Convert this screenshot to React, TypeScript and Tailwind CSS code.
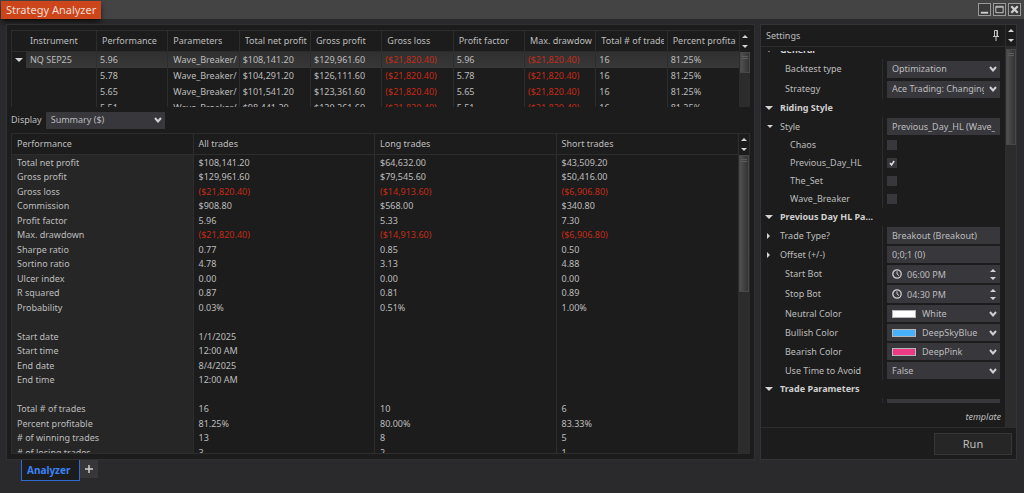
import { useState, type ReactNode } from 'react';

const GRID_COLUMNS = [
    'Performance', 'Parameters', 'Total net profit', 'Gross profit', 'Gross loss',
    'Profit factor', 'Max. drawdown', 'Total # of trades', 'Percent profitable',
];

const GRID_ROWS = [
    ['5.96', 'Wave_Breaker/', '$108,141.20', '$129,961.60', '($21,820.40)', '5.96', '($21,820.40)', '16', '81.25%'],
    ['5.78', 'Wave_Breaker/', '$104,291.20', '$126,111.60', '($21,820.40)', '5.78', '($21,820.40)', '16', '81.25%'],
    ['5.65', 'Wave_Breaker/', '$101,541.20', '$123,361.60', '($21,820.40)', '5.65', '($21,820.40)', '16', '81.25%'],
    ['5.51', 'Wave_Breaker/', '$98,441.20', '$120,261.60', '($21,820.40)', '5.51', '($21,820.40)', '16', '81.25%'],
];

const SUMMARY_ROWS = [
    ['Total net profit', '$108,141.20', '$64,632.00', '$43,509.20'],
    ['Gross profit', '$129,961.60', '$79,545.60', '$50,416.00'],
    ['Gross loss', '($21,820.40)', '($14,913.60)', '($6,906.80)'],
    ['Commission', '$908.80', '$568.00', '$340.80'],
    ['Profit factor', '5.96', '5.33', '7.30'],
    ['Max. drawdown', '($21,820.40)', '($14,913.60)', '($6,906.80)'],
    ['Sharpe ratio', '0.77', '0.85', '0.50'],
    ['Sortino ratio', '4.78', '3.13', '4.88'],
    ['Ulcer index', '0.00', '0.00', '0.00'],
    ['R squared', '0.87', '0.81', '0.89'],
    ['Probability', '0.03%', '0.51%', '1.00%'],
    ['', '', '', ''],
    ['Start date', '1/1/2025', '', ''],
    ['Start time', '12:00 AM', '', ''],
    ['End date', '8/4/2025', '', ''],
    ['End time', '12:00 AM', '', ''],
    ['', '', '', ''],
    ['Total # of trades', '16', '10', '6'],
    ['Percent profitable', '81.25%', '80.00%', '83.33%'],
    ['# of winning trades', '13', '8', '5'],
    ['# of losing trades', '3', '2', '1'],
];

// losses are shown in parentheses
const tone = (value: string) => (value.startsWith('(') ? 'text-[#c42b17]' : '');

function Triangle({ dir, size = 'h-[3px] w-[6px]' }: { dir: 'up' | 'down' | 'right'; size?: string }) {
    const points = { up: '0,4 4,0 8,4', down: '0,0 8,0 4,4', right: '0,0 4,4 0,8' }[dir];
    return (
        <svg viewBox={dir === 'right' ? '0 0 4 8' : '0 0 8 4'} className={`block fill-[#d4d4d4] ${size}`}>
            <polygon points={points} />
        </svg>
    );
}

function Chevron() {
    return (
        <svg viewBox="0 0 8 6" className="pointer-events-none absolute right-[3px] top-1/2 h-[6px] w-2 -translate-y-1/2 fill-none stroke-[#d0d0d0] stroke-2">
            <path d="M1 1l3 3.5L7 1" />
        </svg>
    );
}

function ScrollArrows() {
    return (
        <div className="flex h-[21px] shrink-0 flex-col items-center justify-between bg-[#1c1c1c] py-1">
            <button aria-label="Scroll up"><Triangle dir="up" /></button>
            <button aria-label="Scroll down"><Triangle dir="down" /></button>
        </div>
    );
}

function ScrollBar({ thumb }: { thumb: string }) {
    return (
        <div className="flex w-[11px] shrink-0 flex-col border-l border-[#2d2d2d] bg-[#2c2c2d]">
            <ScrollArrows />
            <div className={`flex flex-col items-center gap-px border border-[#484848] bg-linear-to-r from-[#505050] to-[#333] pt-[3px] ${thumb}`}>
                <span className="h-px w-[6px] bg-[#5c5c5c]" />
                <span className="h-px w-[6px] bg-[#5c5c5c]" />
            </div>
        </div>
    );
}

function ResultsGrid() {
    return (
        <div className="flex h-[77px] shrink-0 border-l border-t border-[#2d2d2d]">
            <div className="min-w-0 flex-1 overflow-hidden">
                <table className="w-full table-fixed border-separate border-spacing-0 text-left">
                    <colgroup>
                        <col className="w-[14px]" />
                        <col className="w-[71px]" />
                    </colgroup>
                    <thead>
                        <tr className="h-[21px]">
                            <th colSpan={2} className="border-b border-r border-[#2d2d2d] p-0 pl-[18px] font-normal">Instrument</th>
                            {GRID_COLUMNS.map((name) => (
                                <th key={name} className="border-b border-r border-[#2d2d2d] p-0 pl-[5px] pr-[3px] font-normal last:border-r-0">
                                    <div className="overflow-hidden whitespace-nowrap">{name}</div>
                                </th>
                            ))}
                        </tr>
                    </thead>
                    <tbody>
                        {GRID_ROWS.map((row, i) => (
                            <tr key={row[0]} className="h-4">
                                <td className="p-0 pl-[3px]">
                                    {i === 0 && <button aria-label="Collapse" className="block"><Triangle dir="down" size="h-1 w-2" /></button>}
                                </td>
                                <td className={`border-r border-[#2d2d2d] p-0 pl-1 ${i === 0 ? 'bg-linear-to-b from-[#303030] to-[#383838]' : ''}`}>
                                    {i === 0 ? 'NQ SEP25' : ''}
                                </td>
                                {row.map((value, j) => (
                                    <td
                                        key={j}
                                        className={`overflow-hidden whitespace-nowrap border-r border-[#2d2d2d] p-0 last:border-r-0 ${j === 1 ? 'pl-[5px]' : 'pl-[3px]'} ${i === 0 ? 'bg-linear-to-b from-[#303030] to-[#383838]' : ''} ${tone(value)}`}
                                    >
                                        {value}
                                    </td>
                                ))}
                            </tr>
                        ))}
                    </tbody>
                </table>
            </div>
            <ScrollBar thumb="h-[21px]" />
        </div>
    );
}

function SummaryTable() {
    return (
        <div className="flex min-h-0 flex-1 border border-[#2d2d2d]">
            <div className="min-w-0 flex-1 overflow-hidden bg-linear-to-r from-[#262626] from-25% to-[#1c1c1c] to-25%">
                <table className="w-full table-fixed border-separate border-spacing-0 text-left">
                    <thead>
                        <tr className="h-[21px] bg-[#1c1c1c]">
                            {['Performance', 'All trades', 'Long trades', 'Short trades'].map((name) => (
                                <th key={name} className="border-b border-r border-[#2d2d2d] p-0 pl-[5px] font-normal last:border-r-0">{name}</th>
                            ))}
                        </tr>
                    </thead>
                    <tbody>
                        {SUMMARY_ROWS.map((row, i) => (
                            <tr key={i} className="odd:h-[15px] odd:leading-[15px] even:h-[14px] even:leading-[14px]">
                                {row.map((value, j) => (
                                    <td key={j} className={`border-r border-[#2d2d2d] p-0 pl-[5px] last:border-r-0 ${tone(value)}`}>{value}</td>
                                ))}
                            </tr>
                        ))}
                    </tbody>
                </table>
            </div>
            <ScrollBar thumb="h-[137px]" />
        </div>
    );
}

function Category({ title }: { title: string }) {
    return (
        <button className="flex h-[18px] shrink-0 items-center text-left font-bold text-[#d0d0d0]">
            <span className="flex w-[19px] pl-1"><Triangle dir="down" size="h-1 w-2" /></span>
            {title}
        </button>
    );
}

interface RowProps {
    label: string;
    id: string;
    height?: string;
    indent?: string;
    arrow?: 'down' | 'right';
    children: ReactNode;
}

function Row({ label, id, height = 'h-[19px]', indent = 'pl-6', arrow, children }: RowProps) {
    return (
        <div className={`flex shrink-0 ${height}`}>
            <div className={`flex w-[122px] shrink-0 items-center border-r border-[#2d2d2d] ${arrow ? '' : indent}`}>
                {arrow && (
                    <button aria-label={`Toggle ${label}`} className="flex w-[19px] pl-[6px]">
                        <Triangle dir={arrow} size={arrow === 'right' ? 'h-[6px] w-[3px]' : 'h-[3px] w-[6px]'} />
                    </button>
                )}
                <label htmlFor={id} className="whitespace-nowrap">{label}</label>
            </div>
            <div className="flex min-w-0 flex-1 items-center pl-1 pr-[5px]">{children}</div>
        </div>
    );
}

function SelectBox({ id, value, color }: { id: string; value: string; color?: string }) {
    return (
        <div className="relative flex h-[17px] w-full items-center bg-[#37373c]">
            {color && <span className={`ml-[5px] h-2 w-6 shrink-0 border border-[#b5b5b5] ${color}`} />}
            <select id={id} className={`mr-4 h-full min-w-0 flex-1 appearance-none overflow-hidden bg-transparent outline-none ${color ? 'pl-[6px]' : 'pl-[5px]'}`}>
                <option>{value}</option>
            </select>
            <Chevron />
        </div>
    );
}

function TextBox({ id, value }: { id: string; value: string }) {
    return <input id={id} type="text" defaultValue={value} className="h-[17px] w-full min-w-0 bg-[#37373c] px-[5px] outline-none" />;
}

function TimeBox({ id, value }: { id: string; value: string }) {
    return (
        <div className="flex h-[18px] w-full items-center bg-[#37373c] pl-[5px] pr-1">
            <svg viewBox="0 0 10 10" className="size-[10px] shrink-0 fill-none stroke-[#cfcfcf]">
                <circle cx="5" cy="5" r="4.2" strokeWidth="1.3" />
                <path d="M5 2.3V5l2 1.6" />
            </svg>
            <input id={id} type="text" defaultValue={value} className="h-full min-w-0 flex-1 bg-transparent pl-[5px] outline-none" />
            <div className="flex flex-col gap-[5px]">
                <button aria-label="Later"><Triangle dir="up" /></button>
                <button aria-label="Earlier"><Triangle dir="down" /></button>
            </div>
        </div>
    );
}

function Settings() {
    const [styles, setStyles] = useState<Record<string, boolean>>({
        Chaos: false, Previous_Day_HL: true, The_Set: false, Wave_Breaker: false,
    });

    return (
        <section className="flex w-[257px] shrink-0 flex-col border border-[#333] bg-[#1c1c1c]">
            <div className="flex min-h-0 flex-1">
                <div className="flex min-w-0 flex-1 flex-col border-b border-[#2d2d2d]">
                    <header className="flex h-[22px] shrink-0 items-center justify-between border-b border-[#2d2d2d] pl-[5px] pr-[6px]">
                        <h2>Settings</h2>
                        <button aria-label="Pin">
                            <svg viewBox="0 0 6 11" className="block h-[11px] w-[6px] fill-none stroke-[#c4c4c4]">
                                <path d="M1.5 6V.5h3V6M0 6.5h6M3 6.5V11M4 1v5" />
                            </svg>
                        </button>
                    </header>
                    <div className="mt-1 flex min-h-0 flex-1 flex-col overflow-hidden">
                        <div className="-mt-[10px] flex shrink-0 flex-col">
                            <Category title="General" />
                            <Row id="backtest" label="Backtest type" height="h-5"><SelectBox id="backtest" value="Optimization" /></Row>
                            <Row id="strategy" label="Strategy" height="h-5"><SelectBox id="strategy" value="Ace Trading: Changing" /></Row>
                            <Category title="Riding Style" />
                            <Row id="style" label="Style" arrow="down"><TextBox id="style" value="Previous_Day_HL (Wave_Breaker)" /></Row>
                            {Object.keys(styles).map((name) => (
                                <Row key={name} id={name} label={name} height="h-[18px]" indent="pl-[29px]">
                                    <span className="relative flex size-[10px]">
                                        <input
                                            id={name}
                                            type="checkbox"
                                            checked={styles[name]}
                                            onChange={(e) => setStyles({ ...styles, [name]: e.target.checked })}
                                            className="size-[10px] appearance-none bg-[#37373c]"
                                        />
                                        {styles[name] && (
                                            <svg viewBox="0 0 10 10" className="pointer-events-none absolute inset-0 fill-none stroke-[#e0e0e0] stroke-[1.5]">
                                                <path d="M3 5l1.5 2L7.2 3" />
                                            </svg>
                                        )}
                                    </span>
                                </Row>
                            ))}
                            <Category title="Previous Day HL Pa..." />
                            <Row id="trade-type" label="Trade Type?" arrow="right"><TextBox id="trade-type" value="Breakout (Breakout)" /></Row>
                            <Row id="offset" label="Offset (+/-)" arrow="right"><TextBox id="offset" value="0;0;1 (0)" /></Row>
                            <Row id="start" label="Start Bot" height="h-5"><TimeBox id="start" value="06:00 PM" /></Row>
                            <Row id="stop" label="Stop Bot" height="h-5"><TimeBox id="stop" value="04:30 PM" /></Row>
                            <Row id="neutral" label="Neutral Color"><SelectBox id="neutral" value="White" color="bg-white" /></Row>
                            <Row id="bullish" label="Bullish Color"><SelectBox id="bullish" value="DeepSkyBlue" color="bg-[#47b2fb]" /></Row>
                            <Row id="bearish" label="Bearish Color"><SelectBox id="bearish" value="DeepPink" color="bg-[#ee3a86]" /></Row>
                            <Row id="avoid" label="Use Time to Avoid"><SelectBox id="avoid" value="False" /></Row>
                            <Category title="Trade Parameters" />
                            <Row id="next" label=""><TextBox id="next" value="" /></Row>
                        </div>
                    </div>
                    <div className="flex h-6 shrink-0 items-center justify-end pr-1 pt-1">
                        <a href="#template" className="italic">template</a>
                    </div>
                </div>
                <ScrollBar thumb="mt-[3px] h-24" />
            </div>
            <div className="flex h-[31px] shrink-0 items-center justify-end pr-1">
                <button className="h-[22px] w-[78px] border border-[#363636] bg-[#262626] text-[11px]">Run</button>
            </div>
        </section>
    );
}

function TitleBar() {
    return (
        <header className="flex h-[19px] shrink-0 items-center justify-between bg-[#444] pl-px pr-[3px]">
            <h1 className="flex h-[18px] items-center bg-[#cc451b] px-[5px] text-[11px] text-[#f0dcd2] shadow-md shadow-black/60">
                Strategy Analyzer
            </h1>
            <div className="flex gap-[2px]">
                {[
                    { name: 'Minimize', d: 'M2 9.5h8', w: 'stroke-2' },
                    { name: 'Maximize', d: 'M2 2.5h8v7H2zM2 3.5h8', w: 'stroke-1' },
                    { name: 'Close', d: 'M2.5 2.5l7 7M9.5 2.5l-7 7', w: 'stroke-[2.5]' },
                ].map(({ name, d, w }) => (
                    <button key={name} aria-label={name} className="border border-[#999] bg-[#3a3a3a]">
                        <svg viewBox="0 0 12 12" className={`block size-[11px] fill-none stroke-[#d0d0d0] ${w}`}>
                            <path d={d} />
                        </svg>
                    </button>
                ))}
            </div>
        </header>
    );
}

export default function App() {
    return (
        <div className="flex h-screen flex-col overflow-hidden bg-[#2a2a2c] font-['Noto_Sans',sans-serif] text-[9px] leading-3 text-[#bdbdbd]">
            <TitleBar />
            <main className="flex min-h-0 flex-1 gap-[5px] pl-[6px] pr-[7px] pt-[5px]">
                <section className="flex min-w-0 flex-1 flex-col border border-[#303030] bg-[#1c1c1c] px-1 pb-[5px] pt-[5px]">
                    <ResultsGrid />
                    <div className="flex h-[26px] shrink-0 items-center gap-1">
                        <label htmlFor="display">Display</label>
                        <div className="w-[119px]"><SelectBox id="display" value="Summary ($)" /></div>
                    </div>
                    <SummaryTable />
                </section>
                <Settings />
            </main>
            <footer className="flex h-[33px] shrink-0 items-start pl-[21px]">
                <button className="h-[21px] border border-t-0 border-[#2f6bd0] bg-[#1c1c1c] pl-[5px] pr-[9px] text-[10px] font-bold text-[#3b82f6]">
                    Analyzer
                </button>
                <button aria-label="New tab" className="flex h-[18px] w-[18px] items-center justify-center bg-[#37373a]">
                    <svg viewBox="0 0 8 8" className="size-2 stroke-[#d0d0d0] stroke-[1.5]"><path d="M4 0v8M0 4h8" /></svg>
                </button>
            </footer>
        </div>
    );
}
